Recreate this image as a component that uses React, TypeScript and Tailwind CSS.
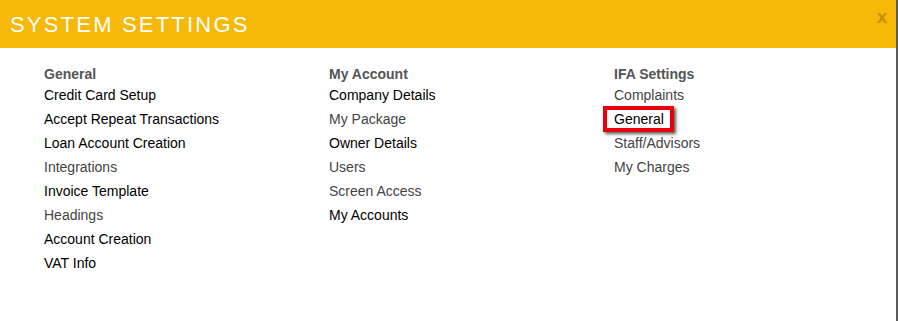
import React from "react";

type Item = { label: string; muted?: boolean; marked?: boolean };
type Group = { title: string; items: Item[] };

const groups: Group[] = [
  {
    title: "General",
    items: [
      { label: "Credit Card Setup" },
      { label: "Accept Repeat Transactions" },
      { label: "Loan Account Creation" },
      { label: "Integrations", muted: true },
      { label: "Invoice Template" },
      { label: "Headings", muted: true },
      { label: "Account Creation" },
      { label: "VAT Info" },
    ],
  },
  {
    title: "My Account",
    items: [
      { label: "Company Details" },
      { label: "My Package", muted: true },
      { label: "Owner Details" },
      { label: "Users", muted: true },
      { label: "Screen Access", muted: true },
      { label: "My Accounts" },
    ],
  },
  {
    title: "IFA Settings",
    items: [
      { label: "Complaints", muted: true },
      { label: "General", marked: true },
      { label: "Staff/Advisors", muted: true },
      { label: "My Charges", muted: true },
    ],
  },
];

export default function App() {
  return (
    <div
      className="flex h-[321px] w-full flex-col overflow-hidden border-r-2 border-[#5a5a5a] bg-white"
      style={{ fontFamily: '"Liberation Sans", Arial, sans-serif' }}
    >
      <div className="flex h-[48px] shrink-0 items-start justify-between bg-[#F8B808] pl-[10px] pr-[9px]">
        <h1 className="mt-[12px] text-[22px] leading-[26px] tracking-[2.2px] text-white">SYSTEM SETTINGS</h1>
        <button type="button" className="mt-[7px] text-[18px] font-bold leading-[20px] text-[#C49008]">
          x
        </button>
      </div>

      <div className="flex pl-[44px] pt-[16px]">
        {groups.map((group) => (
          <div key={group.title} className="flex w-[285px] shrink-0 flex-col">
            <div className="mb-[-1px] text-[14px] font-bold leading-[20px] text-[#555]">{group.title}</div>
            {group.items.map((item) => (
              <div key={item.label} className="text-[14px] leading-[24px]">
                <span className={`relative inline-block ${item.muted ? "text-[#444]" : "text-black"}`}>
                  {item.marked && (
                    <span className="absolute -top-[1px] -bottom-[1px] -left-[11px] -right-[10px] border-[4px] border-[#E8000B] shadow-[2px_2px_3px_rgba(0,0,0,0.65)]" />
                  )}
                  <span className="relative">{item.label}</span>
                </span>
              </div>
            ))}
          </div>
        ))}
      </div>
    </div>
  );
}
